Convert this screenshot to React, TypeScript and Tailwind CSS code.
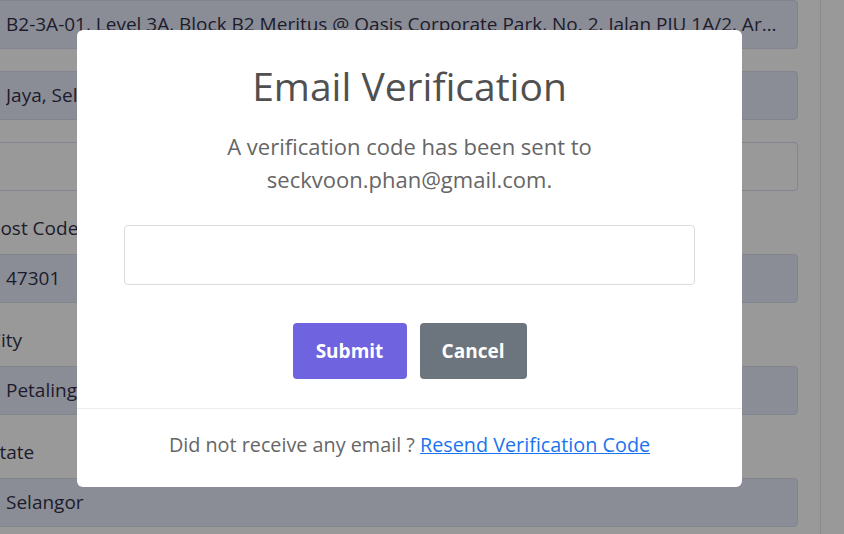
import React from "react";

const font = { fontFamily: '"Open Sans", "Noto Sans", "Liberation Sans", sans-serif' };

function Field({ text, filled = true }: { text?: string; filled?: boolean }) {
  return (
    <div
      className={`h-[49px] w-[806px] -ml-[8px] rounded-[4px] border border-[#82858d] px-[13px] flex items-center overflow-hidden whitespace-nowrap text-[19px] text-[#1d1b2c] ${
        filled ? "bg-[#8a8d96]" : "bg-[#999999] border-[#8b8b8b]"
      }`}
    >
      <span className="truncate">{text}</span>
    </div>
  );
}

function Label({ text }: { text: string }) {
  return (
    <div className="pt-[24px] pb-[13px] leading-[26px] text-[19px] text-[#1d1b2c] -ml-[11px] whitespace-nowrap">
      {text}
    </div>
  );
}

export default function App() {
  return (
    <div className="relative w-[844px] h-[534px] overflow-hidden bg-[#999999]" style={font}>
      {/* background form */}
      <div className="flex h-full">
        <div className="flex flex-col w-[820px]">
          <Field text="B2-3A-01, Level 3A, Block B2 Meritus @ Oasis Corporate Park, No. 2, Jalan PJU 1A/2, Ara Damansara" />
          <div className="h-[22px]" />
          <Field text="Jaya, Selangor" />
          <div className="h-[22px]" />
          <Field filled={false} />
          <Label text="Post Code" />
          <Field text="47301" />
          <Label text="City" />
          <Field text="Petaling Jaya" />
          <Label text="State" />
          <Field text="Selangor" />
        </div>
        <div className="w-px h-full bg-[#8a8a8a]" />
        <div className="flex-1" />
      </div>

      {/* modal */}
      <div className="absolute left-[77px] top-[30px] w-[665px] bg-white rounded-[6px] flex flex-col items-center">
        <h1 className="pt-[33px] text-[39px] leading-[46px] font-normal text-[#505050]">
          Email Verification
        </h1>
        <p className="mt-[21px] text-[22px] leading-[33px] text-[#666666] text-center">
          A verification code has been sent to
          <br />
          seckvoon.phan@gmail.com.
        </p>
        <input
          type="text"
          className="mt-[29px] w-[571px] h-[60px] border border-[#dcdcdc] rounded-[4px] outline-none px-3"
        />
        <div className="mt-[38px] flex gap-[13px]">
          <button className="w-[114px] h-[56px] rounded-[4px] bg-[#6f63e0] text-white font-bold text-[19px]">
            Submit
          </button>
          <button className="w-[107px] h-[56px] rounded-[4px] bg-[#6c757d] text-white font-bold text-[19px]">
            Cancel
          </button>
        </div>
        <div className="mt-[29px] w-full border-t border-[#ececec]" />
        <div className="pt-[23px] pb-[29px] leading-[26px] text-[19.8px] text-[#666666]">
          Did not receive any email ?{" "}
          <a href="#" className="text-[#1a73f0] underline">
            Resend Verification Code
          </a>
        </div>
      </div>
    </div>
  );
}
